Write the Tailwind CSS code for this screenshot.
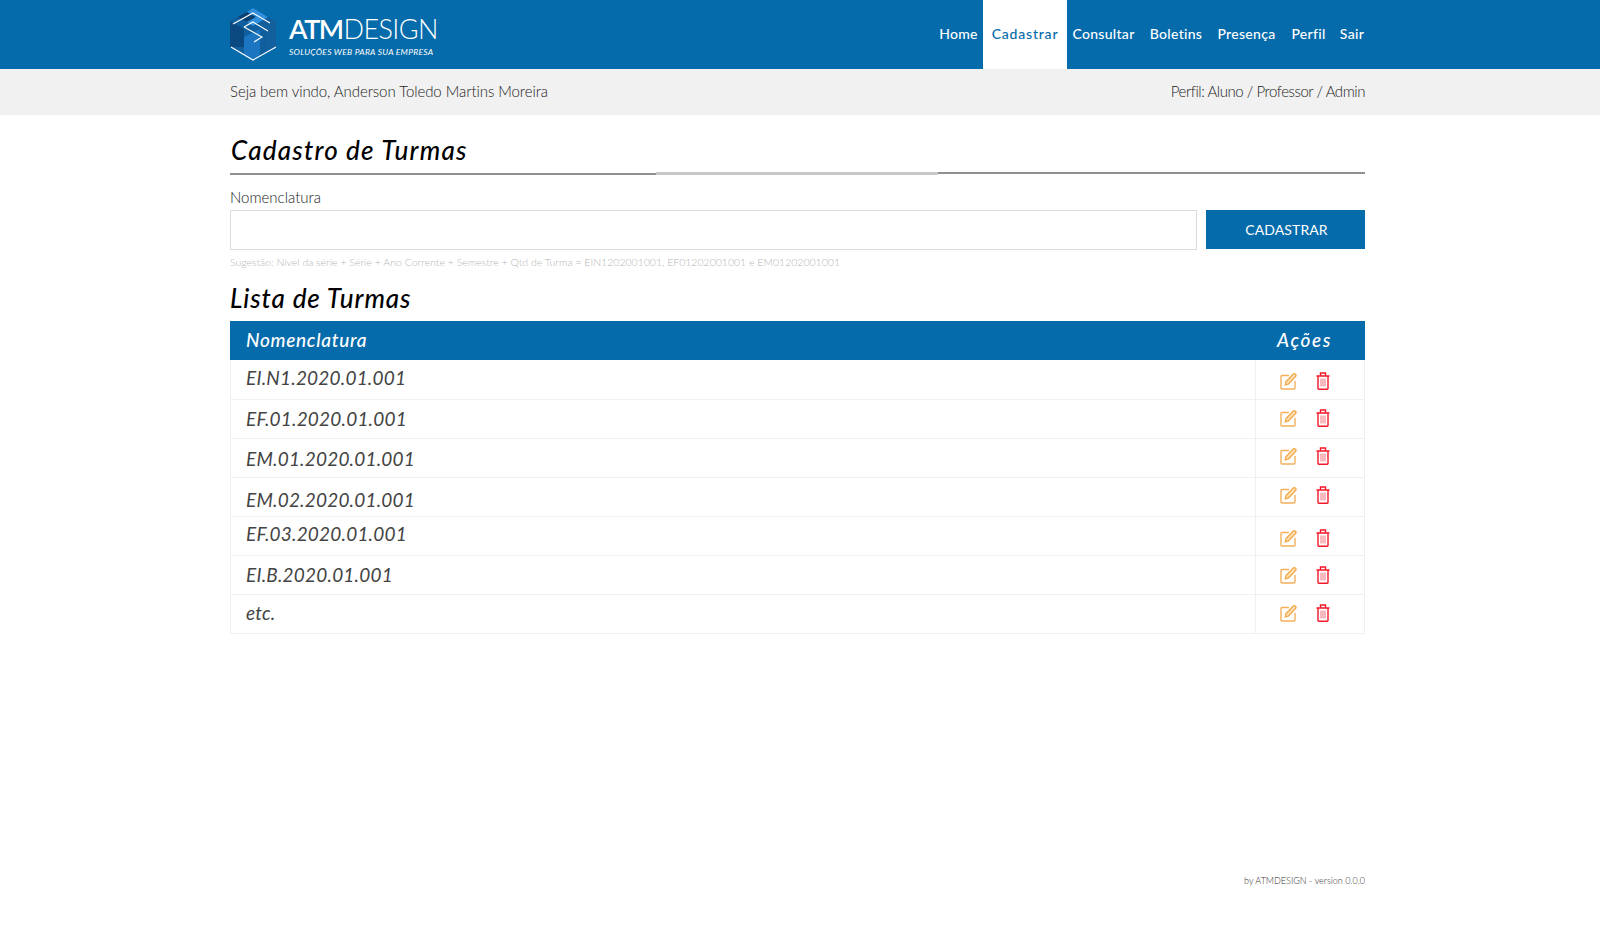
<!DOCTYPE html>
<html lang="pt-BR">
<head>
    <meta charset="UTF-8">
    <meta name="viewport" content="width=device-width, initial-scale=1.0">
    <script src="https://cdn.jsdelivr.net/npm/@tailwindcss/browser@4"></script>
    <title>Cadastro de Turmas</title>
</head>
<body class="bg-white font-['Lato',sans-serif] h-[934px] overflow-hidden">
    <!-- icons -->
    <svg width="0" height="0" class="absolute">
        <symbol id="edit" viewBox="0 0 17 18">
            <path d="M9 3.5H2a1 1 0 0 0-1 1V16a1 1 0 0 0 1 1h12a1 1 0 0 0 1-1V9" fill="none" stroke="#f5b05a" stroke-width="1.4"/>
            <path d="M5.2 13l.8-3.5L13 2.2a1.4 1.4 0 0 1 2.5 2.4L8.6 12z" fill="#fbdcae" stroke="#f2a43e" stroke-width="1.2"/>
        </symbol>
        <symbol id="trash" viewBox="0 0 14 18">
            <path d="M.5 4h13M4.5 3.6V1h5v2.6M2 4v12.4a.8.8 0 0 0 .8.8h8.4a.8.8 0 0 0 .8-.8V4" fill="none" stroke="#f5182a" stroke-width="1.4"/>
            <path d="M5 6.5v8M7 6.5v8M9 6.5v8" fill="none" stroke="#f2747e" stroke-width="1"/>
        </symbol>
    </svg>

    <!-- navbar -->
    <header class="bg-[#066bab] h-[69px]">
        <div class="w-[1135px] ml-[230px] h-full flex justify-between">
            <div class="flex items-center gap-3">
                <svg width="47" height="54" viewBox="0 0 47 54" class="mt-[-1px]">
                    <polygon points="23,1 46,14 46,40 23,53 0,40 0,14" fill="#0f5f9e"/>
                    <polygon points="23,1 38,10 23,19 9,10" fill="#2f8fdc"/>
                    <polygon points="0,14 14,22 14,40 0,40" fill="#0b4a80"/>
                    <polygon points="14,30 30,22 30,48 23,53 14,47" fill="#1b75c0"/>
                    <polygon points="30,18 46,14 46,40 36,46 36,26" fill="#14609f"/>
                    <polygon points="8,10 17,5 26,10 17,15" fill="#0a3f70"/>
                    <path d="M3 17 L23 6 L40 16 M14 20 L23 15 L38 24 M14 20 L32 30 L24 35 M1 40 L23 53 L46 40" fill="none" stroke="#fff" stroke-width="1.1"/>
                </svg>
                <div class="text-white flex flex-col">
                    <div class="text-[27px] leading-[30px] mt-[3px] whitespace-nowrap"><span class="font-semibold tracking-[-1.5px]">ATM</span><span class="font-light tracking-[-0.6px] ml-[1px]">DESIGN</span></div>
                    <div class="text-[8.5px] leading-[12px] italic tracking-[0.25px] mt-[2px] whitespace-nowrap">SOLUÇÕES WEB PARA SUA EMPRESA</div>
                </div>
            </div>
            <nav class="flex text-white text-[14px] font-medium tracking-[0.3px] whitespace-nowrap pb-0">
                <a href="#" class="h-full flex items-center justify-center pb-[2px] w-[35px] mr-[7px]">Home</a>
                <a href="#" class="h-full flex items-center justify-center pb-[2px] w-[84px] bg-white text-[#066bab] tracking-[0.8px]">Cadastrar</a>
                <a href="#" class="h-full flex items-center justify-center pb-[2px] w-[65px] ml-[4px]">Consultar</a>
                <a href="#" class="h-full flex items-center justify-center pb-[2px] w-[50px] ml-[15px]">Boletins</a>
                <a href="#" class="h-full flex items-center justify-center pb-[2px] w-[61px] ml-[15px]">Presença</a>
                <a href="#" class="h-full flex items-center justify-center pb-[2px] w-[31px] ml-[16px]">Perfil</a>
                <a href="#" class="h-full flex items-center justify-center pb-[2px] w-[26px] ml-[15px]">Sair</a>
            </nav>
        </div>
    </header>

    <!-- welcome bar -->
    <div class="bg-[#f1f1f1] h-[46px]">
        <div class="w-[1135px] ml-[230px] h-full flex justify-between items-center text-[15px] font-light text-[#222] pb-[2px]">
            <span class="tracking-[-0.07px]">Seja bem vindo, Anderson Toledo Martins Moreira</span>
            <span class="tracking-[-0.45px]">Perfil: Aluno / Professor / Admin</span>
        </div>
    </div>

    <main class="w-[1135px] ml-[230px]">
        <h1 class="text-[26px] leading-[32px] italic font-medium text-black pt-[19px] px-[1px] tracking-[1.2px]">Cadastro de Turmas</h1>
        <!-- the rule under the title is three slightly offset pieces -->
        <div class="flex h-[3px] mt-[6px]">
            <div class="w-[426px] h-[2px] self-end bg-[#909090]"></div>
            <div class="w-[282px] h-[3px] bg-[#c8c8c8]"></div>
            <div class="flex-1 h-[2px] self-start bg-[#909090]"></div>
        </div>

        <label class="block text-[15px] leading-[20px] font-light text-[#222] mt-[12px]">Nomenclatura</label>
        <div class="flex gap-[9px] mt-[3px]">
            <input type="text" class="w-[967px] h-[40px] border border-[#dcdcdc] bg-white">
            <button class="w-[159px] h-[39px] bg-[#066bab] text-white text-[14px] tracking-[0.1px] pl-[2px]">CADASTRAR</button>
        </div>
        <p class="text-[10.5px] leading-[14px] font-light text-[#b5b5b5] mt-[5px]">Sugestão: Nível da série + Série + Ano Corrente + Semestre + Qtd de Turma = EIN1202001001, EF01202001001 e EM01202001001</p>

        <h2 class="text-[26px] leading-[32px] italic font-medium text-black mt-[13px] tracking-[0.9px]">Lista de Turmas</h2>

        <!-- table -->
        <div class="mt-[7px] border-x border-b border-[#f0f0f0]">
            <div class="flex items-center h-[39px] bg-[#066bab] text-white italic text-[19px] font-medium tracking-[0.7px] -mx-px">
                <div class="flex-1 pl-[16px]">Nomenclatura</div>
                <div class="w-[110px] pl-[22px] tracking-[1.6px]">Ações</div>
            </div>

            <div class="flex h-[40px] border-b border-[#f0f0f0]">
                <div class="flex-1 pl-[15px] italic text-[19px] tracking-[0.2px] text-[#444] pb-[3px] flex items-center">EI.N1.2020.01.001</div>
                <div class="w-[109px] border-l border-[#f0f0f0] flex items-center gap-[19px] pl-[24px] pt-[3px]">
                    <svg width="17" height="18"><use href="#edit"/></svg>
                    <svg width="14" height="18"><use href="#trash"/></svg>
                </div>
            </div>
            <div class="flex h-[39px] border-b border-[#f0f0f0]">
                <div class="flex-1 pl-[15px] italic text-[19px] tracking-[0.2px] text-[#444] flex items-center">EF.01.2020.01.001</div>
                <div class="w-[109px] border-l border-[#f0f0f0] flex items-center gap-[19px] pl-[24px] pb-[2px]">
                    <svg width="17" height="18"><use href="#edit"/></svg>
                    <svg width="14" height="18"><use href="#trash"/></svg>
                </div>
            </div>
            <div class="flex h-[39px] border-b border-[#f0f0f0]">
                <div class="flex-1 pl-[15px] italic text-[19px] tracking-[0.2px] text-[#444] pt-[3px] flex items-center">EM.01.2020.01.001</div>
                <div class="w-[109px] border-l border-[#f0f0f0] flex items-center gap-[19px] pl-[24px] pb-[4px]">
                    <svg width="17" height="18"><use href="#edit"/></svg>
                    <svg width="14" height="18"><use href="#trash"/></svg>
                </div>
            </div>
            <div class="flex h-[39px] border-b border-[#f0f0f0]">
                <div class="flex-1 pl-[15px] italic text-[19px] tracking-[0.2px] text-[#444] pt-[6px] flex items-center">EM.02.2020.01.001</div>
                <div class="w-[109px] border-l border-[#f0f0f0] flex items-center gap-[19px] pl-[24px] pb-[4px]">
                    <svg width="17" height="18"><use href="#edit"/></svg>
                    <svg width="14" height="18"><use href="#trash"/></svg>
                </div>
            </div>
            <div class="flex h-[39px] border-b border-[#f0f0f0]">
                <div class="flex-1 pl-[15px] italic text-[19px] tracking-[0.2px] text-[#444] pb-[4px] flex items-center">EF.03.2020.01.001</div>
                <div class="w-[109px] border-l border-[#f0f0f0] flex items-center gap-[19px] pl-[24px] pt-[4px]">
                    <svg width="17" height="18"><use href="#edit"/></svg>
                    <svg width="14" height="18"><use href="#trash"/></svg>
                </div>
            </div>
            <div class="flex h-[39px] border-b border-[#f0f0f0]">
                <div class="flex-1 pl-[15px] italic text-[19px] tracking-[0.2px] text-[#444] flex items-center">EI.B.2020.01.001</div>
                <div class="w-[109px] border-l border-[#f0f0f0] flex items-center gap-[19px] pl-[24px]">
                    <svg width="17" height="18"><use href="#edit"/></svg>
                    <svg width="14" height="18"><use href="#trash"/></svg>
                </div>
            </div>
            <div class="flex h-[38px]">
                <div class="flex-1 pl-[15px] italic text-[19px] tracking-[0.2px] text-[#444] pb-[2px] flex items-center">etc.</div>
                <div class="w-[109px] border-l border-[#f0f0f0] flex items-center gap-[19px] pl-[24px] pb-[2px]">
                    <svg width="17" height="18"><use href="#edit"/></svg>
                    <svg width="14" height="18"><use href="#trash"/></svg>
                </div>
            </div>
        </div>

        <footer class="text-right text-[9px] leading-[14px] font-light text-[#333] mt-[240px]">by ATMDESIGN - version 0.0.0</footer>
    </main>
</body>
</html>
